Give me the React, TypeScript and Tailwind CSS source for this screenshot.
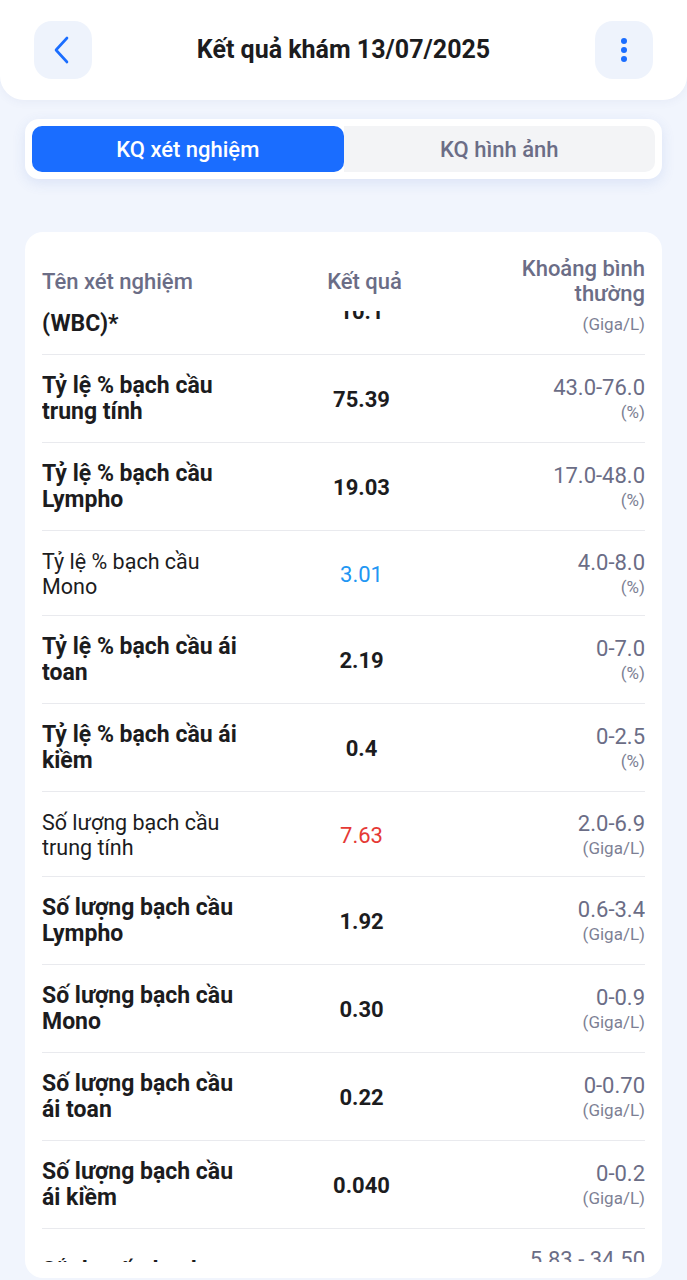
import React from 'react';

type Row = {
  name: string;
  value: string;
  range: string;
  unit: string;
  bold: boolean;
  tone?: 'low' | 'high';
};

const rows: Row[] = [
  { name: 'Số lượng bạch cầu (WBC)*', value: '10.1', range: '4.0-10.0', unit: '(Giga/L)', bold: true },
  { name: 'Tỷ lệ % bạch cầu trung tính', value: '75.39', range: '43.0-76.0', unit: '(%)', bold: true },
  { name: 'Tỷ lệ % bạch cầu Lympho', value: '19.03', range: '17.0-48.0', unit: '(%)', bold: true },
  { name: 'Tỷ lệ % bạch cầu Mono', value: '3.01', range: '4.0-8.0', unit: '(%)', bold: false, tone: 'low' },
  { name: 'Tỷ lệ % bạch cầu ái toan', value: '2.19', range: '0-7.0', unit: '(%)', bold: true },
  { name: 'Tỷ lệ % bạch cầu ái kiềm', value: '0.4', range: '0-2.5', unit: '(%)', bold: true },
  { name: 'Số lượng bạch cầu trung tính', value: '7.63', range: '2.0-6.9', unit: '(Giga/L)', bold: false, tone: 'high' },
  { name: 'Số lượng bạch cầu Lympho', value: '1.92', range: '0.6-3.4', unit: '(Giga/L)', bold: true },
  { name: 'Số lượng bạch cầu Mono', value: '0.30', range: '0-0.9', unit: '(Giga/L)', bold: true },
  { name: 'Số lượng bạch cầu ái toan', value: '0.22', range: '0-0.70', unit: '(Giga/L)', bold: true },
  { name: 'Số lượng bạch cầu ái kiềm', value: '0.040', range: '0-0.2', unit: '(Giga/L)', bold: true },
  { name: 'Sắt huyết thanh', value: '16.2', range: '5.83 - 34.50', unit: '(µmol/L)', bold: true },
];

function ResultRow({ row, first }: { row: Row; first: boolean }) {
  const valueColor =
    row.tone === 'low' ? 'text-[#2196f3] font-normal' : row.tone === 'high' ? 'text-[#e53935] font-normal' : 'text-[#1c1c1e] font-bold';
  return (
    <div
      className={`flex items-center pt-[18px] ${row.bold ? 'pb-[17px]' : 'pb-[16px]'} ${
        first ? '' : 'border-t border-[#e9eaee]'
      }`}
    >
      <div
        className={`w-[206px] shrink-0 text-[#1c1c1e] ${
          row.bold ? 'text-[23px] font-bold leading-[26px]' : 'text-[21.5px] font-normal leading-[25px]'
        }`}
      >
        {row.name}
      </div>
      <div className={`flex-1 text-center text-[22px] ${valueColor}`}>{row.value}</div>
      <div className="w-[170px] shrink-0 text-right">
        <div className="text-[22px] leading-[26px] text-[#6b6d86]">{row.range}</div>
        <div className="text-[17px] leading-[22px] text-[#7d7f94]">{row.unit}</div>
      </div>
    </div>
  );
}

export default function App() {
  return (
    <div className="min-h-screen bg-[#f1f5fd] font-['Roboto',sans-serif]">
      {/* Header */}
      <div className="flex h-[100px] items-center justify-between rounded-b-[24px] bg-white px-[34px] shadow-[0_2px_10px_rgba(60,90,160,0.06)]">
        <button className="flex h-[58px] w-[58px] items-center justify-center rounded-[18px] bg-[#eef3fc]">
          <svg width="30" height="30" viewBox="0 0 30 30" fill="none" stroke="#1a6dff" strokeWidth="2.6" strokeLinecap="round" strokeLinejoin="round">
            <path d="M19 3 8 15l11 12" />
          </svg>
        </button>
        <h1 className="text-[25px] font-bold text-[#1c1c1e]">Kết quả khám 13/07/2025</h1>
        <button className="flex h-[58px] w-[58px] items-center justify-center rounded-[18px] bg-[#eef3fc]">
          <svg width="8" height="26" viewBox="0 0 8 26" fill="#1a6dff">
            <circle cx="4" cy="4" r="3" />
            <circle cx="4" cy="13" r="3" />
            <circle cx="4" cy="22" r="3" />
          </svg>
        </button>
      </div>

      {/* Tabs */}
      <div className="mx-[25px] mt-[19px] flex h-[60px] rounded-[14px] bg-white p-[7px] shadow-[0_4px_14px_rgba(60,100,200,0.12)]">
        <div className="flex flex-1 items-center justify-center rounded-[10px] bg-[#1a6dff] text-[22px] font-medium text-white">
          KQ xét nghiệm
        </div>
        <div className="flex flex-1 items-center justify-center rounded-r-[10px] bg-[#f3f4f6] text-[22px] font-medium text-[#6b6d86]">
          KQ hình ảnh
        </div>
      </div>

      {/* Results card */}
      <div className="mx-[25px] mt-[53px] rounded-[18px] bg-white px-[17px] pb-[16px] pt-[24px]">
        <div className="flex items-center pb-[5px] text-[22px] font-medium leading-[25px] text-[#6b6d86]">
          <div className="w-[206px] shrink-0">Tên xét nghiệm</div>
          <div className="flex-1 pl-[6px] text-center">Kết quả</div>
          <div className="w-[170px] shrink-0 text-right">
            Khoảng bình
            <br />
            thường
          </div>
        </div>
        <div className="h-[951px] overflow-hidden">
          <div className="-mt-[44px]">
            {rows.map((row, i) => (
              <ResultRow key={row.name} row={row} first={i === 0} />
            ))}
          </div>
        </div>
      </div>
    </div>
  );
}
